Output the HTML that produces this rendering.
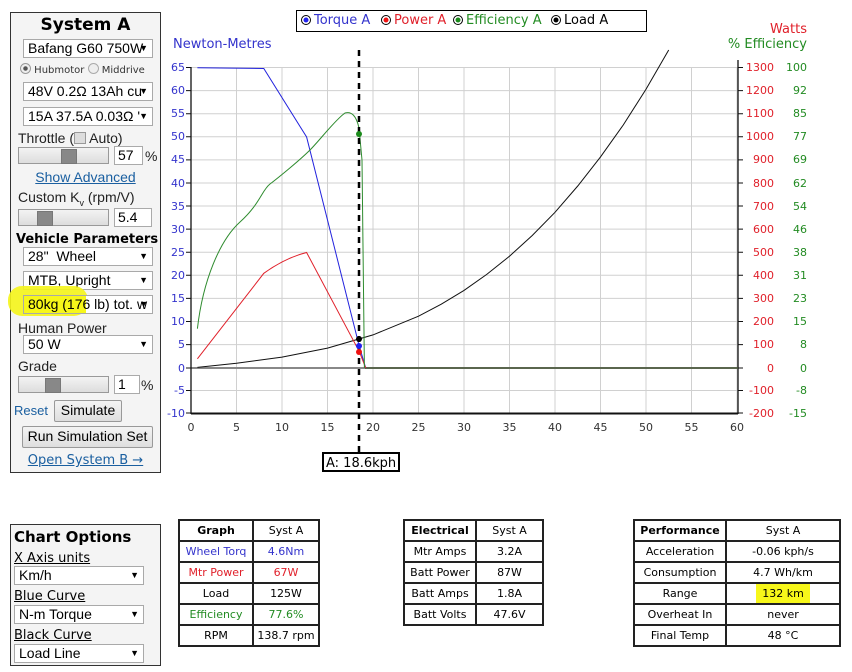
<!DOCTYPE html>
<html><head><meta charset="utf-8"><style>
body{margin:0;width:852px;height:672px;background:#fff;position:relative;font-family:"DejaVu Sans","Liberation Sans",sans-serif;overflow:hidden}
.a{position:absolute;white-space:nowrap}
.sel{position:absolute;background:#fff;border:1px solid #a9a9a9;font-family:"Liberation Sans",sans-serif;font-size:14px;height:17px;line-height:17px;padding-left:4px;box-sizing:content-box;overflow:hidden;color:#000}
.sel:after{content:"▼";position:absolute;right:4px;top:0;font-size:9px}
.sld{position:absolute;height:15px;background:linear-gradient(#f3f3f3,#ddd);border:1px solid #999}
.sld i{position:absolute;top:1px;width:14px;height:13px;background:#888;border:1px solid #777}
.inp{position:absolute;background:#fff;border:1px solid #aaa;font-family:"Liberation Sans",sans-serif;font-size:14px;height:17px;line-height:17px;padding-left:3px}
.btn{position:absolute;background:linear-gradient(#f4f4f4,#dedede);border:1px solid #999;font-family:"Liberation Sans",sans-serif;font-size:14px;text-align:center;line-height:19px;border-radius:2px}
.lbl{font-size:14px;color:#222;font-family:"Liberation Sans",sans-serif}
table{position:absolute;border-collapse:collapse;font-size:11px;font-family:"DejaVu Sans",sans-serif}
td{border:2px solid #222;text-align:center;height:19px;padding:0 2px}
</style></head><body>

<div class="a" style="left:10px;top:12px;width:149px;height:459px;border:1px solid #333;background:#f4f4f4"></div>
<div class="a" style="left:10px;top:15px;width:151px;text-align:center;font-weight:bold;font-size:17px">System A</div>
<div class="sel" style="left:23px;top:39px;width:124px">Bafang G60 750W</div>
<div class="a" style="left:20px;top:63px;font-size:10px;color:#333"><span style="display:inline-block;width:9px;height:9px;border:1px solid #999;border-radius:50%;background:radial-gradient(#555 30%,#eee 40%);vertical-align:-1px"></span> Hubmotor <span style="display:inline-block;width:9px;height:9px;border:1px solid #aaa;border-radius:50%;background:#eee;vertical-align:-1px"></span> Middrive</div>
<div class="sel" style="left:23px;top:82px;width:124px">48V 0.2Ω 13Ah cu</div>
<div class="sel" style="left:23px;top:107px;width:124px">15A 37.5A 0.03Ω '</div>
<div class="a lbl" style="left:18px;top:130px">Throttle (<span style="display:inline-block;width:10px;height:10px;border:1px solid #999;background:#ddd;vertical-align:-1px"></span> Auto)</div>
<div class="sld" style="left:18px;top:147px;width:89px"><i style="left:42px"></i></div>
<div class="inp" style="left:114px;top:146px;width:24px">57</div>
<div class="a lbl" style="left:145px;top:148px">%</div>
<div class="a" style="left:10px;top:169px;width:151px;text-align:center;font-size:14px;font-family:'Liberation Sans',sans-serif;color:#1a5fa0;text-decoration:underline">Show Advanced</div>
<div class="a lbl" style="left:18px;top:189px">Custom K<sub style="font-size:9px">v</sub> (rpm/V)</div>
<div class="sld" style="left:18px;top:209px;width:89px"><i style="left:18px"></i></div>
<div class="inp" style="left:114px;top:208px;width:33px">5.4</div>
<div class="a" style="left:16px;top:232px;font-weight:bold;font-size:13px">Vehicle Parameters</div>
<div class="sel" style="left:23px;top:247px;width:124px">28"&nbsp; Wheel</div>
<div class="sel" style="left:23px;top:271px;width:124px">MTB, Upright</div>
<div class="a" style="left:8px;top:286px;width:80px;height:30px;background:#f5f51a;border-radius:14px;opacity:.9"></div>
<div class="sel" style="left:23px;top:295px;width:124px;background:linear-gradient(90deg,#f7f71a 62px,#fff 62px)">80kg (176 lb) tot. w</div>
<div class="a lbl" style="left:18px;top:320px">Human Power</div>
<div class="sel" style="left:23px;top:335px;width:124px">50 W</div>
<div class="a lbl" style="left:18px;top:358px">Grade</div>
<div class="sld" style="left:18px;top:376px;width:89px"><i style="left:26px"></i></div>
<div class="inp" style="left:114px;top:375px;width:21px">1</div>
<div class="a lbl" style="left:141px;top:377px">%</div>
<div class="a" style="left:14px;top:403px;font-size:13px;color:#1a5fa0;font-family:'Liberation Sans',sans-serif">Reset</div>
<div class="btn" style="left:54px;top:400px;width:66px;height:20px">Simulate</div>
<div class="btn" style="left:22px;top:426px;width:129px;height:20px">Run Simulation Set</div>
<div class="a" style="left:10px;top:453px;width:151px;text-align:center;font-size:13px;color:#1a5fa0;text-decoration:underline">Open System B →</div>

<div class="a" style="left:10px;top:524px;width:149px;height:140px;border:1px solid #333;background:#f4f4f4"></div>
<div class="a" style="left:14px;top:528px;font-weight:bold;font-size:15px">Chart Options</div>
<div class="a" style="left:14px;top:551px;font-size:13px;text-decoration:underline">X Axis units</div>
<div class="sel" style="left:14px;top:566px;width:124px">Km/h</div>
<div class="a" style="left:14px;top:589px;font-size:13px;text-decoration:underline">Blue Curve</div>
<div class="sel" style="left:14px;top:605px;width:124px">N-m Torque</div>
<div class="a" style="left:14px;top:628px;font-size:13px;text-decoration:underline">Black Curve</div>
<div class="sel" style="left:14px;top:644px;width:124px">Load Line</div>

<svg class="a" style="left:0;top:0" width="852" height="500" font-family="DejaVu Sans, sans-serif" font-size="11">
<g stroke="#d0d0d0" stroke-width="1">
<path d="M236.5 67V413M282 67V413M327.5 67V413M373 67V413M418.5 67V413M464 67V413M509.5 67V413M555 67V413M600.5 67V413M646 67V413M691.5 67V413M737 67V413"/>
<path d="M191 67.5H738M191 90.6H738M191 113.7H738M191 136.8H738M191 159.9H738M191 183H738M191 206H738M191 229.1H738M191 252.2H738M191 275.3H738M191 298.4H738M191 321.5H738M191 344.6H738M191 390.5H738"/>
</g>
<path d="M191 368H738" stroke="#888" stroke-width="2"/>
<path d="M191 413.5H738" stroke="#111" stroke-width="2"/>
<path d="M191 67V414M738 60V414" stroke="#111" stroke-width="1.3"/>
<g stroke="#111"><path d="M186 67.5h5M186 90.6h5M186 113.7h5M186 136.8h5M186 159.9h5M186 183h5M186 206h5M186 229.1h5M186 252.2h5M186 275.3h5M186 298.4h5M186 321.5h5M186 344.6h5M186 368h5M186 390.5h5M186 413h5"/>
<path d="M738 67.5h5M738 90.6h5M738 113.7h5M738 136.8h5M738 159.9h5M738 183h5M738 206h5M738 229.1h5M738 252.2h5M738 275.3h5M738 298.4h5M738 321.5h5M738 344.6h5M738 368h5M738 390.5h5M738 413h5"/></g>
<g fill="#3333cc" text-anchor="end">
<text x="185" y="71">65</text><text x="185" y="94">60</text><text x="185" y="117">55</text><text x="185" y="140">50</text><text x="185" y="163">45</text><text x="185" y="187">40</text><text x="185" y="210">35</text><text x="185" y="233">30</text><text x="185" y="256">25</text><text x="185" y="279">20</text><text x="185" y="302">15</text><text x="185" y="325">10</text><text x="185" y="348">5</text><text x="185" y="372">0</text><text x="185" y="394">-5</text><text x="185" y="417">-10</text></g>
<g fill="#e0202a" text-anchor="end">
<text x="774" y="71">1300</text><text x="774" y="94">1200</text><text x="774" y="117">1100</text><text x="774" y="140">1000</text><text x="774" y="163">900</text><text x="774" y="187">800</text><text x="774" y="210">700</text><text x="774" y="233">600</text><text x="774" y="256">500</text><text x="774" y="279">400</text><text x="774" y="302">300</text><text x="774" y="325">200</text><text x="774" y="348">100</text><text x="774" y="372">0</text><text x="774" y="394">-100</text><text x="774" y="417">-200</text></g>
<g fill="#228b22" text-anchor="end">
<text x="807" y="71">100</text><text x="807" y="94">92</text><text x="807" y="117">85</text><text x="807" y="140">77</text><text x="807" y="163">69</text><text x="807" y="187">62</text><text x="807" y="210">54</text><text x="807" y="233">46</text><text x="807" y="256">38</text><text x="807" y="279">31</text><text x="807" y="302">23</text><text x="807" y="325">15</text><text x="807" y="348">8</text><text x="807" y="372">0</text><text x="807" y="394">-8</text><text x="807" y="417">-15</text></g>
<g fill="#333" text-anchor="middle">
<text x="191" y="431">0</text><text x="236.5" y="431">5</text><text x="282" y="431">10</text><text x="327.5" y="431">15</text><text x="373" y="431">20</text><text x="418.5" y="431">25</text><text x="464" y="431">30</text><text x="509.5" y="431">35</text><text x="555" y="431">40</text><text x="600.5" y="431">45</text><text x="646" y="431">50</text><text x="691.5" y="431">55</text><text x="737" y="431">60</text></g>
<text x="173" y="48" fill="#3333cc" font-size="13">Newton-Metres</text>
<text x="807" y="33" fill="#e0202a" font-size="13" text-anchor="end">Watts</text>
<text x="807" y="48" fill="#228b22" font-size="13" text-anchor="end">% Efficiency</text>
<path d="M365 368H738" stroke="#4a5a3a" stroke-width="1.5" fill="none"/>
<path d="M197.4 367.4L236.5 363.2L282 357.1L327.5 348.1L373 334.9L418.5 316.2L441.25 304.2L464 290.4L486.75 274.4L509.5 256.2L532.25 235.5L555 212.3L577.75 186L600.5 156.9L623.25 125L646 89.3L668.7 50" stroke="#111" fill="none"/>
<path d="M197.4 67.7L263.8 68.5L306.6 137L359.4 346.7L365.7 368" stroke="#2222dd" fill="none"/>
<path d="M197.4 358.8L263.8 273.3Q285 258 306.6 252.5L359.4 351.8L365.7 368" stroke="#e0202a" fill="none"/>
<path d="M197.4 328.7C203 280 220 240 240 222S262 190 270 184S300 160 310 150S335 120 345 113Q355 110 359 128L362 160L364.4 368" stroke="#2e8b2e" fill="none"/>
<path d="M359 50V453" stroke="#000" stroke-width="2.5" stroke-dasharray="6,5"/>
<circle cx="359" cy="134" r="3" fill="#1a8a1a"/>
<circle cx="359" cy="339" r="3" fill="#000"/>
<circle cx="359" cy="346" r="3" fill="#2222ee"/>
<circle cx="359" cy="352" r="3" fill="#ee1111"/>
<rect x="323" y="453" width="76" height="18" fill="#fff" stroke="#000" stroke-width="2"/>
<text x="326" y="467" font-size="13">A: 18.6kph</text>
<rect x="296.5" y="10.5" width="350" height="21" fill="#fff" stroke="#000"/>
<g font-size="13">
<circle cx="306" cy="20" r="4.5" fill="#fff" stroke="#000"/><circle cx="306" cy="20" r="2.5" fill="#2222ee"/>
<text x="314" y="24" fill="#3333cc">Torque A</text>
<circle cx="386" cy="20" r="4.5" fill="#fff" stroke="#000"/><circle cx="386" cy="20" r="2.5" fill="#ee1111"/>
<text x="394" y="24" fill="#e0202a">Power A</text>
<circle cx="458" cy="20" r="4.5" fill="#fff" stroke="#000"/><circle cx="458" cy="20" r="2.5" fill="#1a8a1a"/>
<text x="466" y="24" fill="#228b22">Efficiency A</text>
<circle cx="556" cy="20" r="4.5" fill="#fff" stroke="#000"/><circle cx="556" cy="20" r="2.5" fill="#000"/>
<text x="564" y="24" fill="#000">Load A</text></g>
</svg>

<table style="left:178px;top:519px;width:142px">
<tr><td style="width:68px;font-weight:bold">Graph</td><td>Syst A</td></tr>
<tr><td style="color:#3333cc">Wheel Torq</td><td style="color:#3333cc">4.6Nm</td></tr>
<tr><td style="color:#e0202a">Mtr Power</td><td style="color:#e0202a">67W</td></tr>
<tr><td>Load</td><td>125W</td></tr>
<tr><td style="color:#228b22">Efficiency</td><td style="color:#228b22">77.6%</td></tr>
<tr><td>RPM</td><td>138.7 rpm</td></tr>
</table>
<table style="left:403px;top:519px;width:141px">
<tr><td style="width:66px;font-weight:bold">Electrical</td><td>Syst A</td></tr>
<tr><td>Mtr Amps</td><td>3.2A</td></tr>
<tr><td>Batt Power</td><td>87W</td></tr>
<tr><td>Batt Amps</td><td>1.8A</td></tr>
<tr><td>Batt Volts</td><td>47.6V</td></tr>
</table>
<table style="left:633px;top:519px;width:208px">
<tr><td style="width:86px;font-weight:bold">Performance</td><td>Syst A</td></tr>
<tr><td>Acceleration</td><td>-0.06 kph/s</td></tr>
<tr><td>Consumption</td><td>4.7 Wh/km</td></tr>
<tr><td>Range</td><td><span style="background:#f7f71a;padding:3px 6px">132 km</span></td></tr>
<tr><td>Overheat In</td><td>never</td></tr>
<tr><td>Final Temp</td><td>48 °C</td></tr>
</table>
</body></html>
